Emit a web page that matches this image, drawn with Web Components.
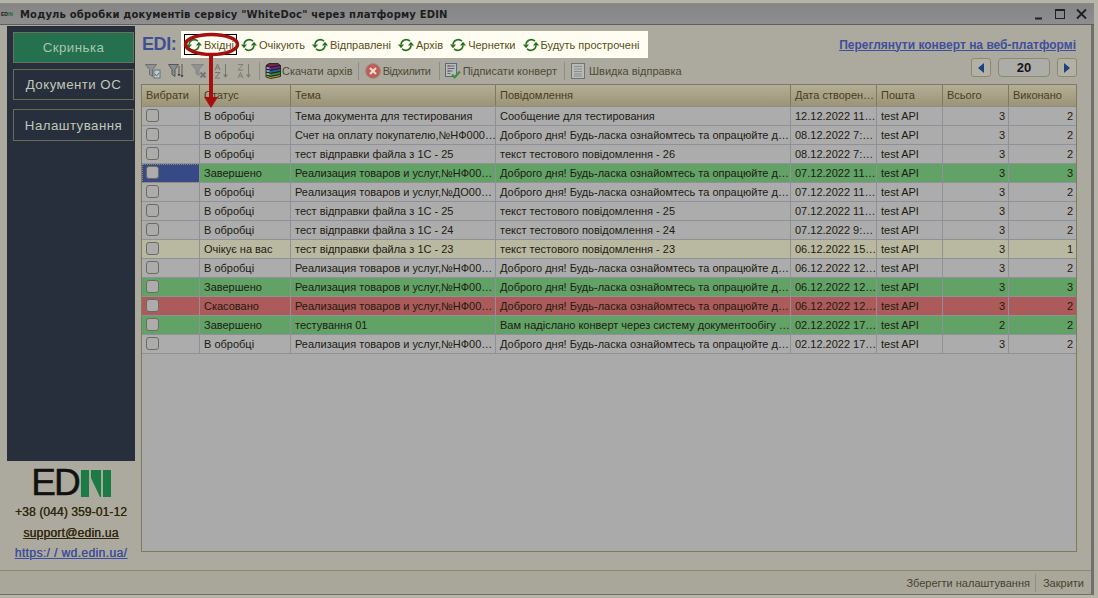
<!DOCTYPE html>
<html lang="uk">
<head>
<meta charset="utf-8">
<title>WhiteDoc EDIN</title>
<style>
  html, body { margin: 0; padding: 0; background: #acaa9f; }
  body { font: 11px "Liberation Sans", Arial, sans-serif; color: #2a2718; overflow: hidden; }
</style>
</head>
<body>
<app-window>
  <title-bar slot="title">Модуль обробки документів сервісу "WhiteDoc" через платформу EDIN</title-bar>
  <side-panel slot="side">
    <nav-button active>Скринька</nav-button>
    <nav-button>Документи ОС</nav-button>
    <nav-button gap>Налаштування</nav-button>
  </side-panel>
  <top-row slot="main"></top-row>
  <tool-row slot="main"></tool-row>
  <doc-grid slot="main"></doc-grid>
  <status-bar slot="status"></status-bar>
</app-window>

<script>
const refreshIcon = `<svg width="16" height="14" viewBox="0 0 16 14" fill="none" stroke="#23701f" stroke-width="1.6">
  <path d="M3 6.500A5.200 5.200 0 0 1 12 3.300"/><path d="M13 7.500A5.200 5.200 0 0 1 4 10.700"/>
  <path d="M0 6.500h6l-3 3.700z" fill="#23701f" stroke="none"/><path d="M10 7.500h6l-3-3.700z" fill="#23701f" stroke="none"/>
</svg>`;

const toolIcons = {
  filter: `<svg width="16" height="16" viewBox="0 0 16 16"><path d="M.5 1.500h11l-4 5v7l-3-2v-5z" fill="#8f9290" stroke="#6c6f70"/><rect x="9" y="7" width="6" height="8" fill="#c8c8c4" stroke="#5f7284"/><path d="M10 11l1.500 2 2.500-3" fill="none" stroke="#3f6f93"/></svg>`,
  filter2: `<svg width="16" height="16" viewBox="0 0 16 16"><path d="M.5 1.500h10l-3.500 5v7l-3-2v-5z" fill="#8b8d8a" stroke="#55585a"/><path d="M11 3v9M14 1v13" stroke="#55585a"/><path d="M9.500 11h3l-1.500 2.500zM12.500 12h3L14 14.500z" fill="#3c3f42"/></svg>`,
  filterOff: `<svg width="16" height="16" viewBox="0 0 16 16"><path d="M.5 1.500h12l-4.500 5v6l-3-2v-4z" fill="#929290" stroke="#858583"/><path d="M9.500 9.500l5 5m0-5l-5 5" stroke="#76767a" stroke-width="2"/></svg>`,
  sortAz: `<svg width="16" height="16" viewBox="0 0 16 16" fill="none" stroke="#77786f"><path d="M1 7l2.500-6L6 7M2 5h3M1 9.500h5L1 15h5"/><path d="M11.500 1v12"/><path d="M9 11.500h5L11.500 15z" fill="#77786f" stroke="none"/></svg>`,
  sortZa: `<svg width="16" height="16" viewBox="0 0 16 16" fill="none" stroke="#7c7d75"><path d="M1 1.500h5L1 7h5M1 15l2.500-5.500L6 15M2 13h3"/><path d="M11.500 1v12"/><path d="M9 11.500h5L11.500 15z" fill="#7c7d75" stroke="none"/></svg>`,
  rar: `<svg width="16" height="16" viewBox="0 0 16 16" stroke="#161616" stroke-width=".8"><path d="M4 .5l9 0 2.500 2-10 1.500L1 2.500z" fill="#7a2350"/><path d="M1 3l4.500 1.500 10-2v3l-10 2L1 6z" fill="#6b2a7d"/><path d="M1 6l4.500 1.500 10-2v3l-10 2L1 9z" fill="#20609f"/><path d="M1 9l4.500 1.500 10-2v3l-10 2L1 12z" fill="#35883a"/><path d="M1 12l4.500 1.500 10-2v2l-10 2-4.500-1.500z" fill="#b59a24"/><path d="M1.500 5h3M1.500 8h3M1.500 11h3" stroke="#e4e4dc" stroke-width="1"/></svg>`,
  reject: `<svg width="16" height="16" viewBox="0 0 16 16"><circle cx="8" cy="8" r="7.300" fill="#c55a52" stroke="#8d8880"/><path d="M5 5l6 6m0-6l-6 6" stroke="#e8dcd4" stroke-width="2.200"/></svg>`,
  sign: `<svg width="16" height="16" viewBox="0 0 16 16"><rect x=".5" y=".5" width="11" height="13" fill="#b9bcb8" stroke="#566a78"/><path d="M2.500 3h7M2.500 5.500h7M2.500 8h5M2.500 10.500h3" stroke="#58657a"/><path d="M2.500 3h2M2.500 8h2" stroke="#a33f3a"/><path d="M7 11.500l2.500 2.800L15 8.500" fill="none" stroke="#3d8f3e" stroke-width="2.200"/></svg>`,
  doc: `<svg width="14" height="16" viewBox="0 0 14 16"><rect x=".5" y=".5" width="13" height="15" fill="#b8bab6" stroke="#69767e"/><path d="M3 3.500h8M3 6h8M3 8.500h8M3 11h8M3 13h8" stroke="#8a8f90"/></svg>`
};

class AppWindow extends HTMLElement {
  constructor() {
    super();
    this.attachShadow({ mode: 'open' });
    this.shadowRoot.innerHTML = `
      <style>
        :host { display: block; position: relative; width: 1098px; height: 598px; box-sizing: border-box; padding-top: 3px; background: #b6b4a8; }
        .frame { height: 592px; width: 1094px; box-sizing: border-box; border-right: 3px solid #6f6f6c; border-bottom: 1px solid #6f6f6c; display: flex; flex-direction: column; background: #acaa9f; }
        .body { flex: 1; display: flex; gap: 6px; padding: 1px 0 0 7px; min-height: 0; }
        .main { width: 936px; display: flex; flex-direction: column; padding-top: 5px; }
        svg.over { position: absolute; left: 0; top: 0; pointer-events: none; }
      </style>
      <div class="frame">
        <slot name="title"></slot>
        <div class="body">
          <slot name="side"></slot>
          <div class="main"><slot name="main"></slot></div>
        </div>
        <slot name="status"></slot>
      </div>
      <svg class="over" width="1098" height="598">
        <ellipse cx="211.500" cy="44.500" rx="26" ry="10" fill="none" stroke="#a50f10" stroke-width="3.500"/>
        <path d="M209 54h4v44h-4z" fill="#a50f10"/>
        <path d="M204 97h14l-7 11z" fill="#a50f10"/>
      </svg>`;
  }
}

class TitleBar extends HTMLElement {
  constructor() {
    super();
    this.attachShadow({ mode: 'open' });
    this.shadowRoot.innerHTML = `
      <style>
        :host { display: flex; align-items: center; height: 22px; background: linear-gradient(#858585, #8e8e8e); border-top: 1px solid #8b8b88; border-bottom: 1px solid #5f5f5f; margin-right: -3px; box-sizing: border-box; padding-left: 1px; }
        .mini { width: 15px; font: bold 5px "Liberation Sans", sans-serif; color: #1a1a1a; letter-spacing: 0; white-space: nowrap; }
        .mini b { color: #1f6b41; }
        .text { margin-left: 4px; font: bold 10px "DejaVu Sans", Verdana, sans-serif; letter-spacing: .17px; color: #1d1d1d; white-space: nowrap; flex: 1; }
        .btns { display: flex; align-items: center; gap: 10px; padding-right: 7px; }
      </style>
      <span class="mini">ED<b>IN</b></span>
      <span class="text"><slot></slot></span>
      <div class="btns">
        <svg width="10" height="12" viewBox="0 0 10 12"><path d="M1 10.500h7" stroke="#202020" stroke-width="2"/></svg>
        <svg width="12" height="12" viewBox="0 0 12 12" fill="none" stroke="#202020"><rect x="1.500" y="1.500" width="9" height="9"/><path d="M1 2h10" stroke-width="2"/></svg>
        <svg width="11" height="12" viewBox="0 0 11 12" fill="none" stroke="#202020" stroke-width="1.800"><path d="M1 1.500l9 9m0-9l-9 9"/></svg>
      </div>`;
  }
}

class SidePanel extends HTMLElement {
  constructor() {
    super();
    this.attachShadow({ mode: 'open' });
    this.shadowRoot.innerHTML = `
      <style>
        :host { display: flex; flex-direction: column; width: 128px; }
        .dark { height: 435px; box-sizing: border-box; background: #262f3b; padding: 6px 1px 0 6px; display: flex; flex-direction: column; gap: 6px; }
        .contact { display: flex; flex-direction: column; align-items: center; color: #30280c; font: 12px "Liberation Sans", sans-serif; text-shadow: .3px 0 0 currentColor; }
        .logo { display: flex; align-items: center; height: 28px; margin-top: 8px; gap: 2px; font: 37px/28px "Liberation Sans", sans-serif; color: #111; text-shadow: none; letter-spacing: -2px; -webkit-text-stroke: .5px #111; }
        .phone { margin-top: 8px; line-height: 15px; letter-spacing: .12px; }
        .mail { margin-top: 6px; line-height: 15px; text-decoration: underline; letter-spacing: .25px; }
        .site { margin-top: 5px; line-height: 15px; text-decoration: underline; color: #3f4f9c; letter-spacing: .4px; }
      </style>
      <div class="dark"><slot></slot></div>
      <div class="contact">
        <div class="logo"><span>ED</span><svg width="30" height="27" viewBox="0 0 30 27"><path d="M0 0h8v27H0zM22 0h8v27h-8z" fill="#1c7a45"/><path d="M10 0h8l2 0v27h-1L10 8z" fill="#1c7a45"/></svg></div>
        <div class="phone">+38 (044) 359-01-12</div>
        <div class="mail">support@edin.ua</div>
        <div class="site">https:/ / wd.edin.ua/</div>
      </div>`;
  }
}

class NavButton extends HTMLElement {
  constructor() {
    super();
    this.attachShadow({ mode: 'open' });
    this.shadowRoot.innerHTML = `
      <style>
        :host { display: flex; align-items: center; justify-content: center; height: 31px; box-sizing: border-box; border: 1px solid #6c6b52; color: #c3c6ba; background: #262f3b; font: 13.300px "Liberation Sans", sans-serif; letter-spacing: .45px; }
        :host([active]) { background: #24704f; color: #a6c6ae; border-color: #66735a; }
        :host([gap]) { margin-top: 3px; height: 32px; }
      </style>
      <slot></slot>`;
  }
}

class TopRow extends HTMLElement {
  constructor() {
    super();
    this.attachShadow({ mode: 'open' });
    const tabs = ['Вхідні', 'Очікують', 'Відправлені', 'Архів', 'Чернетки', 'Будуть прострочені'];
    this.shadowRoot.innerHTML = `
      <style>
        :host { display: flex; align-items: center; height: 27px; }
        .edi { width: 40px; padding-left: 1px; box-sizing: border-box; font: bold 18px "Liberation Sans", sans-serif; color: #3f4f94; letter-spacing: -.4px; }
        .strip { display: flex; align-items: center; gap: 7px; width: 467px; height: 27px; box-sizing: border-box; padding-left: 3px; background: #fffcf2; }
        .tab { display: flex; align-items: center; gap: 2px; color: #575016; height: 21px; box-sizing: border-box; white-space: nowrap; }
        .tab.sel { border: 1px solid #000; padding: 0 2px 0 1px; width: 53px; margin-right: -3px; }
        .link { margin-left: auto; font: bold 12px "Liberation Sans", sans-serif; color: #3f4f9c; text-decoration: underline; white-space: nowrap; padding-right: 1px; }
      </style>
      <span class="edi">EDI:</span>
      <div class="strip">
        ${tabs.map((t, i) => `<span class="tab ${i === 0 ? 'sel' : ''}">${refreshIcon}<span>${t}</span></span>`).join('')}
      </div>
      <span class="link">Переглянути конверт на веб-платформі</span>`;
  }
}

class ToolRow extends HTMLElement {
  constructor() {
    super();
    this.attachShadow({ mode: 'open' });
    this.shadowRoot.innerHTML = `
      <style>
        :host { display: flex; align-items: flex-start; height: 22px; margin-bottom: 4px; }
        .tools { display: flex; align-items: center; height: 22px; padding: 3px 0 0 4px; box-sizing: border-box; color: #4d4a34; white-space: nowrap; }
        .tools svg { display: block; flex: none; }
        .i { margin-right: 7px; }
        .t { margin: 1px 0 0 1px; }
        .sep { width: 1px; height: 18px; background: #8f8d80; flex: none; }
        .pager { margin-left: auto; display: flex; gap: 6px; height: 20px; }
        .pb { width: 20px; height: 19px; box-sizing: border-box; border: 1px solid #8b8972; border-radius: 3px; background: #b3b1a4; display: flex; align-items: center; justify-content: center; }
        .num { width: 52px; height: 19px; box-sizing: border-box; border: 1px solid #8b8972; border-radius: 4px; background: #acaca8; margin: 0 1px; text-align: center; font: bold 13px/18px "Liberation Sans", sans-serif; color: #151515; }
      </style>
      <div class="tools">
        <span class="i">${toolIcons.filter}</span>
        <span class="i">${toolIcons.filter2}</span>
        <span class="i">${toolIcons.filterOff}</span>
        <span class="i">${toolIcons.sortAz}</span>
        <span>${toolIcons.sortZa}</span>
        <span class="sep" style="margin:0 5px 0 6px"></span>
        ${toolIcons.rar}<span class="t">Скачати архів</span>
        <span class="sep" style="margin:0 6px 0 5px"></span>
        ${toolIcons.reject}<span class="t" style="margin-left:2px;letter-spacing:-.4px">Відхилити</span>
        <span class="sep" style="margin:0 5px 0 8px"></span>
        ${toolIcons.sign}<span class="t" style="margin-left:2px">Підписати конверт</span>
        <span class="sep" style="margin:0 6px 0 7px"></span>
        ${toolIcons.doc}<span class="t" style="margin-left:4px">Швидка відправка</span>
      </div>
      <div class="pager">
        <span class="pb"><svg width="8" height="10" viewBox="0 0 8 10"><path d="M7 0v10L1 5z" fill="#1f3f85"/></svg></span>
        <span class="num">20</span>
        <span class="pb"><svg width="8" height="10" viewBox="0 0 8 10"><path d="M1 0v10l6-5z" fill="#1f3f85"/></svg></span>
      </div>`;
  }
}

const invoice = 'Реализация товаров и услуг,№НФ00…';
const hello = 'Доброго дня! Будь-ласка ознайомтесь та опрацюйте д…';
const rows = [
  ['', 'В обробці', 'Тема документа для тестирования', 'Сообщение для тестирования', '12.12.2022 11…', 3, 2],
  ['', 'В обробці', 'Счет на оплату покупателю,№НФ000…', hello, '08.12.2022 7:…', 3, 2],
  ['', 'В обробці', 'тест відправки файла з 1С - 25', 'текст тестового повідомлення - 26', '08.12.2022 7:…', 3, 2],
  ['g', 'Завершено', invoice, hello, '07.12.2022 11…', 3, 3],
  ['', 'В обробці', 'Реализация товаров и услуг,№ДО00…', hello, '07.12.2022 11…', 3, 2],
  ['', 'В обробці', 'тест відправки файла з 1С - 25', 'текст тестового повідомлення - 25', '07.12.2022 11…', 3, 2],
  ['', 'В обробці', 'тест відправки файла з 1С - 24', 'текст тестового повідомлення - 24', '07.12.2022 9:…', 3, 2],
  ['y', 'Очікує на вас', 'тест відправки файла з 1С - 23', 'текст тестового повідомлення - 23', '06.12.2022 15…', 3, 1],
  ['', 'В обробці', invoice, hello, '06.12.2022 12…', 3, 2],
  ['g', 'Завершено', invoice, hello, '06.12.2022 12…', 3, 3],
  ['r', 'Скасовано', invoice, hello, '06.12.2022 12…', 3, 2],
  ['g', 'Завершено', 'тестування 01', 'Вам надіслано конверт через систему документообігу …', '02.12.2022 17…', 2, 2],
  ['', 'В обробці', invoice, hello, '02.12.2022 17…', 3, 2]
];

class DocGrid extends HTMLElement {
  constructor() {
    super();
    this.attachShadow({ mode: 'open' });
    const heads = ['Вибрати', 'Статус', 'Тема', 'Повідомлення', 'Дата створен…', 'Пошта', 'Всього', 'Виконано'];
    const cell = (cls, txt) => `<div class="c ${cls}"><span>${txt}</span></div>`;
    const body = rows.map((r, i) => `<div class="row ${r[0]}">
        <div class="c chk ${i === 3 ? 'cur' : ''}"><i></i></div>
        ${cell('', r[1])}${cell('', r[2])}${cell('', r[3])}${cell('', r[4])}${cell('', 'test API')}
        ${cell('n', r[5])}${cell('n', r[6])}
      </div>`).join('');
    this.shadowRoot.innerHTML = `
      <style>
        :host { display: block; width: 936px; height: 468px; box-sizing: border-box; border: 1px solid #7c7a5f; background: #aaaaaa; color: #1d1b12; overflow: hidden; }
        .row, .head { display: grid; grid-template-columns: 58px 91px 205px 295px 86px 66px 66px 67px; }
        .head { height: 22px; box-sizing: border-box; background: linear-gradient(#b4ae97, #9b9478); border-bottom: 1px solid #8d8d80; color: #4a3e18; }
        .head div { border-right: 1px solid #7f7a5c; padding-left: 4px; line-height: 20px; white-space: nowrap; overflow: hidden; }
        .head div:last-child { border-right: 0; }
        .row { height: 19px; background: #acacac; }
        .c { box-sizing: border-box; height: 19px; border-right: 1px solid #8e9198; border-bottom: 1px solid #8e9198; padding-left: 4px; line-height: 19px; white-space: nowrap; overflow: hidden; }
        .c:last-child { border-right: 0; }
        .n { text-align: right; padding: 0 3px 0 0; }
        .g { background: #62a266; }
        .y { background: #b9b8a0; }
        .r { background: #ac5a5a; }
        .chk i { display: block; width: 13px; height: 13px; box-sizing: border-box; margin: 2px 0 0 0; border: 1px solid #6c6b5e; border-radius: 3px; background: #acacac; }
        .cur { background: #384987; outline: 1px dotted #8c8a60; outline-offset: -1px; }
      </style>
      <div class="head">${heads.map(h => `<div>${h}</div>`).join('')}</div>
      ${body}`;
  }
}

class StatusBar extends HTMLElement {
  constructor() {
    super();
    this.attachShadow({ mode: 'open' });
    this.shadowRoot.innerHTML = `
      <style>
        :host { display: flex; justify-content: flex-end; align-items: center; height: 24px; box-sizing: border-box; border-top: 1px solid #8b8a70; background: #a9a79a; color: #46432e; padding-right: 7px; }
        .sep { width: 1px; height: 18px; background: #8f8d7d; margin: 0 7px 0 5px; }
      </style>
      <span>Зберегти налаштування</span><span class="sep"></span><span>Закрити</span>`;
  }
}

customElements.define('app-window', AppWindow);
customElements.define('title-bar', TitleBar);
customElements.define('side-panel', SidePanel);
customElements.define('nav-button', NavButton);
customElements.define('top-row', TopRow);
customElements.define('tool-row', ToolRow);
customElements.define('doc-grid', DocGrid);
customElements.define('status-bar', StatusBar);
</script>
</body>
</html>
